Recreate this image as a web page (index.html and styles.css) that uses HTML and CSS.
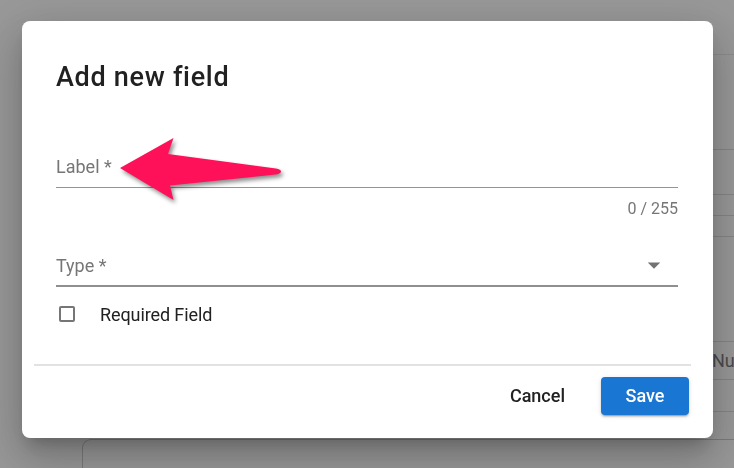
FILE: index.html
```html
<!DOCTYPE html>
<html lang="en">
<head>
<meta charset="utf-8">
<title>Add new field</title>
<link rel="stylesheet" href="styles.css">
</head>
<body>
  <div class="page">
    <div class="table">
      <div class="row row-a"></div>
      <div class="row row-b"></div>
      <div class="row row-c"></div>
      <div class="row row-d"></div>
      <div class="row row-e"></div>
      <div class="row row-f"></div>
      <div class="row row-g"><span class="cell-name">Name</span><span class="cell-num">Number</span></div>
      <div class="row row-h"></div>
    </div>
    <div class="card"></div>
  </div>

  <div class="overlay"></div>

  <div class="dialog-wrap">
    <div class="dialog">
      <h2 class="dialog-title">Add new field</h2>

      <div class="field field-label">
        <div class="field-input"><span class="placeholder">Label *</span></div>
      </div>
      <div class="counter">0 / 255</div>

      <div class="field field-type">
        <div class="field-input">
          <span class="placeholder">Type *</span>
          <svg class="menu-down" viewBox="0 0 24 24" aria-hidden="true"><path d="M7,10L12,15L17,10H7Z"/></svg>
        </div>
      </div>

      <label class="check-row">
        <span class="check-box"></span>
        <span class="check-text">Required Field</span>
      </label>

      <div class="divider"></div>

      <div class="actions">
        <button class="btn btn-text" type="button">Cancel</button>
        <button class="btn btn-primary" type="button">Save</button>
      </div>
    </div>
  </div>

  <svg class="arrow" viewBox="110 130 180 80" aria-hidden="true">
    <path d="M120,168 L173.5,138 L168,154 L276,168.5 Q281,169.5 281,171.5 Q281,173.5 276,174.5 L170,185.5 L173.5,200 Z"/>
  </svg>
</body>
</html>
```

FILE: styles.css
```css
* { box-sizing: border-box; }

html, body {
  margin: 0;
  padding: 0;
  width: 734px;
  height: 468px;
  overflow: hidden;
}

body {
  font-family: Roboto, "Noto Sans", "Liberation Sans", sans-serif;
  background: #ffffff;
  color: #212121;
  position: relative;
}

/* background page (under the overlay) */
.page {
  height: 468px;
  padding-left: 82px;
  display: flex;
  flex-direction: column;
  overflow: hidden;
}

.table {
  display: grid;
  grid-template-rows: 55px 95px 45px 21px 21px 105px 38px 32px;
}

.row {
  border-bottom: 1px solid #dcdcdc;
}

.row-a { border-bottom-color: #e8e8e8; }

.row-g {
  display: grid;
  grid-template-columns: 630px 1fr;
  align-items: center;
  font-size: 18px;
  color: #6f6f6f;
  overflow: hidden;
  white-space: nowrap;
}

.card {
  margin-top: 27px;
  flex: 1;
  border: 1px solid #c9c9c9;
  border-right: none;
  border-bottom: none;
  border-radius: 9px 0 0 0;
}

/* overlay */
.overlay {
  position: fixed;
  inset: 0;
  background: rgba(33, 33, 33, 0.46);
}

.dialog-wrap {
  position: fixed;
  inset: 0;
  padding: 21px 0 0 22px;
  display: flex;
  align-items: flex-start;
}

.dialog {
  width: 691px;
  height: 417px;
  background: #ffffff;
  border-radius: 8px;
  box-shadow: 0 11px 15px -7px rgba(0,0,0,.2),
              0 24px 38px 3px rgba(0,0,0,.14),
              0 9px 46px 8px rgba(0,0,0,.12);
  padding: 38px 35px 23px 34px;
  display: flex;
  flex-direction: column;
}

.dialog-title {
  margin: 0;
  font-size: 27px;
  line-height: 36px;
  font-weight: 500;
  letter-spacing: 0.7px;
  color: #212121;
}

.field-input {
  display: flex;
  align-items: center;
  justify-content: space-between;
  font-size: 18px;
  line-height: 24px;
}

.placeholder {
  color: #767676;
}

.field-label {
  margin-top: 60px;
}

.field-label .field-input {
  padding-bottom: 8px;
  border-bottom: 1px solid #949494;
}

.counter {
  margin-top: 11px;
  text-align: right;
  font-size: 16px;
  line-height: 20px;
  color: #767676;
}

.field-type {
  margin-top: 35px;
}

.field-type .field-input {
  padding-bottom: 7px;
  border-bottom: 2px solid #8f8f8f;
}

.menu-down {
  width: 30px;
  height: 30px;
  margin: -4px 9px -2px 0;
  fill: #737373;
}

.check-row {
  margin-top: 15px;
  display: flex;
  align-items: center;
  height: 24px;
  font-size: 18px;
}

.check-box {
  width: 16px;
  height: 16px;
  margin-left: 3px;
  border: 2px solid #767676;
  border-radius: 2px;
}

.check-text {
  margin-left: 25px;
  letter-spacing: -0.1px;
  color: #212121;
}

.divider {
  margin: 38px -13px 0 -22px;
  height: 2px;
  background: #e2e2e2;
}

.actions {
  margin-top: 11px;
  margin-right: -11px;
  display: flex;
  justify-content: flex-end;
  align-items: center;
  gap: 20px;
}

.btn {
  font-family: Roboto, "Noto Sans", "Liberation Sans", sans-serif;
  font-size: 18px;
  font-weight: 500;
  height: 38px;
  line-height: 36px;
  border: none;
  border-radius: 4px;
  cursor: pointer;
}

.btn-text {
  background: transparent;
  color: #212121;
  padding: 0 16px;
}

.btn-primary {
  width: 88px;
  background: #1976d2;
  color: #ffffff;
  padding: 0;
  box-shadow: 0 3px 1px -2px rgba(0,0,0,.2),
              0 2px 2px 0 rgba(0,0,0,.14),
              0 1px 5px 0 rgba(0,0,0,.12);
}

/* annotation arrow over the dialog */
.arrow {
  position: absolute;
  left: 110px;
  top: 130px;
  width: 180px;
  height: 80px;
  overflow: visible;
  fill: #fe1159;
  filter: drop-shadow(2px 3px 2px rgba(0,0,0,0.45));
}
```
